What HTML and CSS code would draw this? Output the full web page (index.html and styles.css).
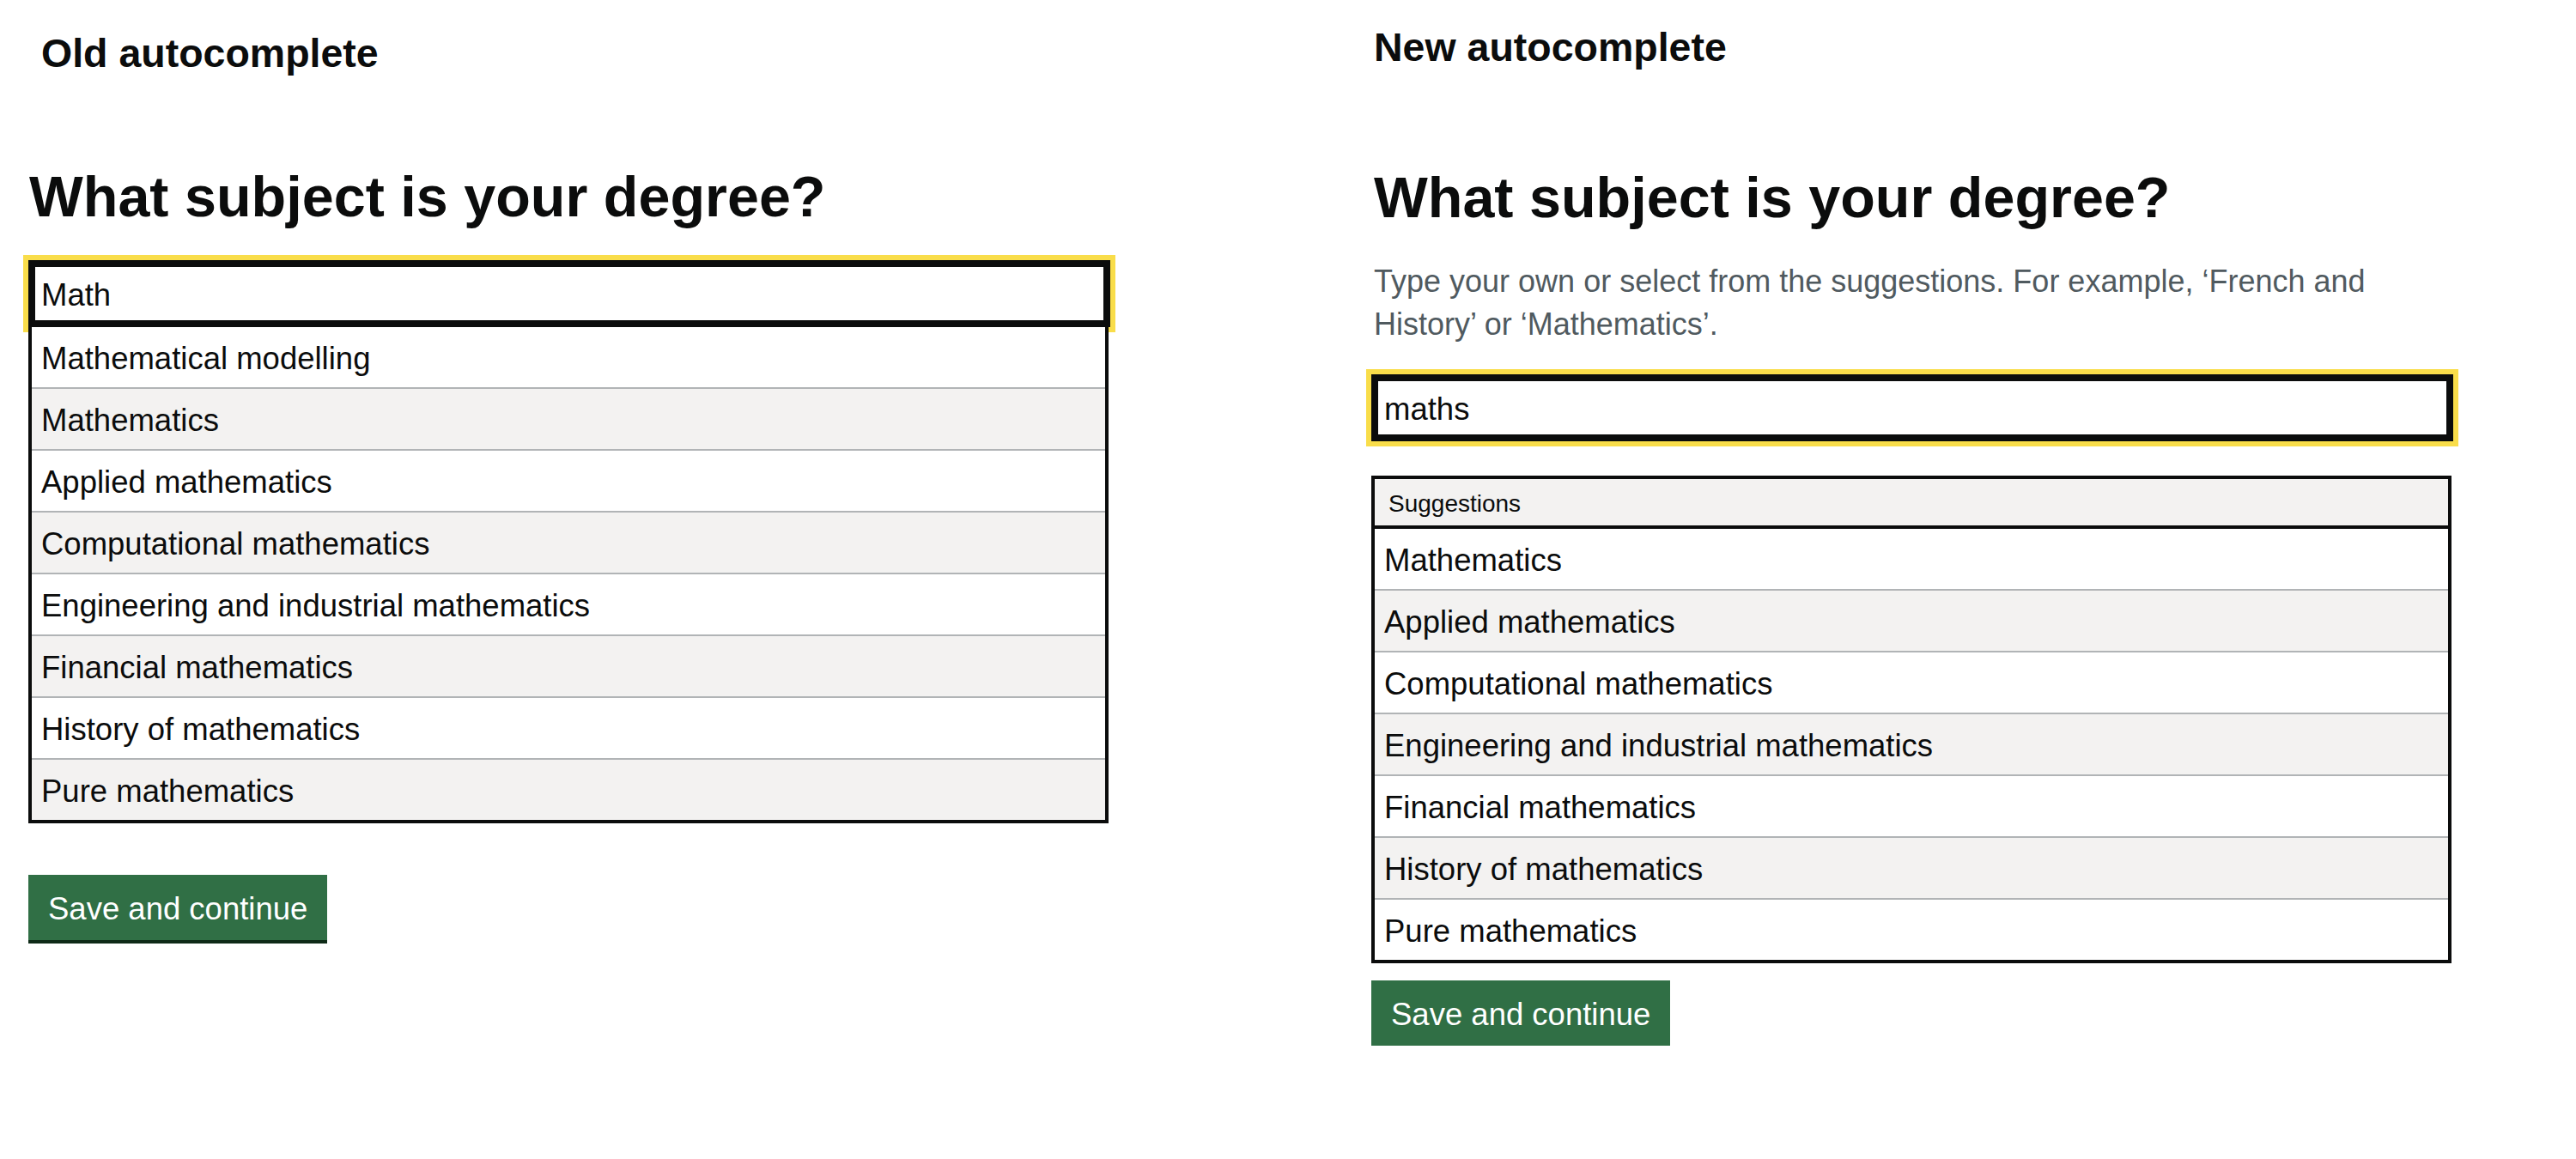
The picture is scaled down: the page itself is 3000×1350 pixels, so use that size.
FILE: index.html
```html
<!DOCTYPE html>
<html lang="en">
<head>
<meta charset="utf-8">
<title>Autocomplete comparison</title>
<link rel="stylesheet" href="styles.css">
</head>
<body>
<main class="page">
  <section class="col col-old">
    <h2 class="demo-title">Old autocomplete</h2>
    <h1 class="question">What subject is your degree?</h1>
    <div class="ac">
      <input class="ac-input" type="text" value="Math" aria-label="What subject is your degree?">
      <ul class="ac-menu">
        <li class="ac-option">Mathematical modelling</li>
        <li class="ac-option">Mathematics</li>
        <li class="ac-option">Applied mathematics</li>
        <li class="ac-option">Computational mathematics</li>
        <li class="ac-option">Engineering and industrial mathematics</li>
        <li class="ac-option">Financial mathematics</li>
        <li class="ac-option">History of mathematics</li>
        <li class="ac-option">Pure mathematics</li>
      </ul>
    </div>
    <button class="btn" type="button">Save and continue</button>
  </section>

  <section class="col col-new">
    <h2 class="demo-title">New autocomplete</h2>
    <h1 class="question">What subject is your degree?</h1>
    <p class="hint">Type your own or select from the suggestions. For example, ‘French and History’ or ‘Mathematics’.</p>
    <input class="ac-input" type="text" value="maths" aria-label="What subject is your degree?">
    <div class="suggest">
      <div class="suggest-head">Suggestions</div>
      <ul class="suggest-list">
        <li class="ac-option">Mathematics</li>
        <li class="ac-option">Applied mathematics</li>
        <li class="ac-option">Computational mathematics</li>
        <li class="ac-option">Engineering and industrial mathematics</li>
        <li class="ac-option">Financial mathematics</li>
        <li class="ac-option">History of mathematics</li>
        <li class="ac-option">Pure mathematics</li>
      </ul>
    </div>
    <button class="btn" type="button">Save and continue</button>
  </section>
</main>
</body>
</html>
```

FILE: styles.css
```css
html, body {
  margin: 0;
  padding: 0;
  background: #ffffff;
}

body {
  font-family: "Liberation Sans", Arial, sans-serif;
  color: #0b0c0c;
}

.page {
  display: flex;
  gap: 304px;
  padding-left: 33px;
}

.col {
  width: 1260px;
  flex: 0 0 1260px;
}

.col-old {
  padding-top: 34px;
}

.col-new {
  padding-top: 27px;
}

.demo-title {
  margin: 0;
  font-size: 46.5px;
  line-height: 56px;
  font-weight: 700;
}

.question {
  margin: 0;
  font-size: 66.5px;
  line-height: 80px;
  font-weight: 700;
}

.col-old .demo-title {
  margin-left: 15px;
}

.col-old .question {
  margin-top: 99px;
  margin-left: 1px;
}

.col-new .demo-title,
.col-new .question,
.col-new .hint {
  margin-left: 3px;
}

.col-new .question {
  margin-top: 107px;
}

.hint {
  margin: 33px 0 0 0;
  font-size: 36px;
  line-height: 50px;
  color: #505a5f;
}

.ac {
  margin-top: 34px;
}

.ac-input {
  display: block;
  box-sizing: border-box;
  width: 100%;
  height: 78px;
  margin: 0;
  padding: 3px 7px 0 7px;
  border: 8px solid #0b0c0c;
  border-radius: 0;
  box-shadow: 0 0 0 6px #f9dd4a;
  background: #ffffff;
  font-family: "Liberation Sans", Arial, sans-serif;
  font-size: 36.5px;
  color: #0b0c0c;
  outline: none;
}

.col-new .ac-input {
  margin-top: 33px;
}

.ac-menu,
.suggest-list {
  margin: 0;
  padding: 0;
  list-style: none;
}

.ac-menu {
  position: relative;
  margin-right: 2px;
  border: 4px solid #0b0c0c;
  border-top: 0;
  background: #ffffff;
}

.ac-option {
  padding: 12px 11px 8px 11px;
  font-size: 36.5px;
  line-height: 50px;
  border-bottom: 2px solid #b1b4b6;
  background: #ffffff;
}

.ac-option:nth-child(even) {
  background: #f3f2f1;
}

.ac-option:last-child {
  border-bottom: 0;
}

.suggest {
  margin-top: 40px;
  margin-right: 2px;
  border: 4px solid #0b0c0c;
  background: #ffffff;
}

.suggest-head {
  padding: 9px 16px 5px 16px;
  font-size: 28px;
  line-height: 40px;
  background: #f3f2f1;
  border-bottom: 4px solid #0b0c0c;
}

.btn {
  display: block;
  margin: 60px 0 0 0;
  padding: 15px 23px 11px 23px;
  border: 0;
  border-radius: 0;
  background: #306f45;
  box-shadow: 0 4px 0 #0e2a17;
  color: #ffffff;
  font-family: "Liberation Sans", Arial, sans-serif;
  font-size: 36.5px;
  line-height: 50px;
  cursor: pointer;
}

.col-new .btn {
  margin-top: 20px;
}
```
